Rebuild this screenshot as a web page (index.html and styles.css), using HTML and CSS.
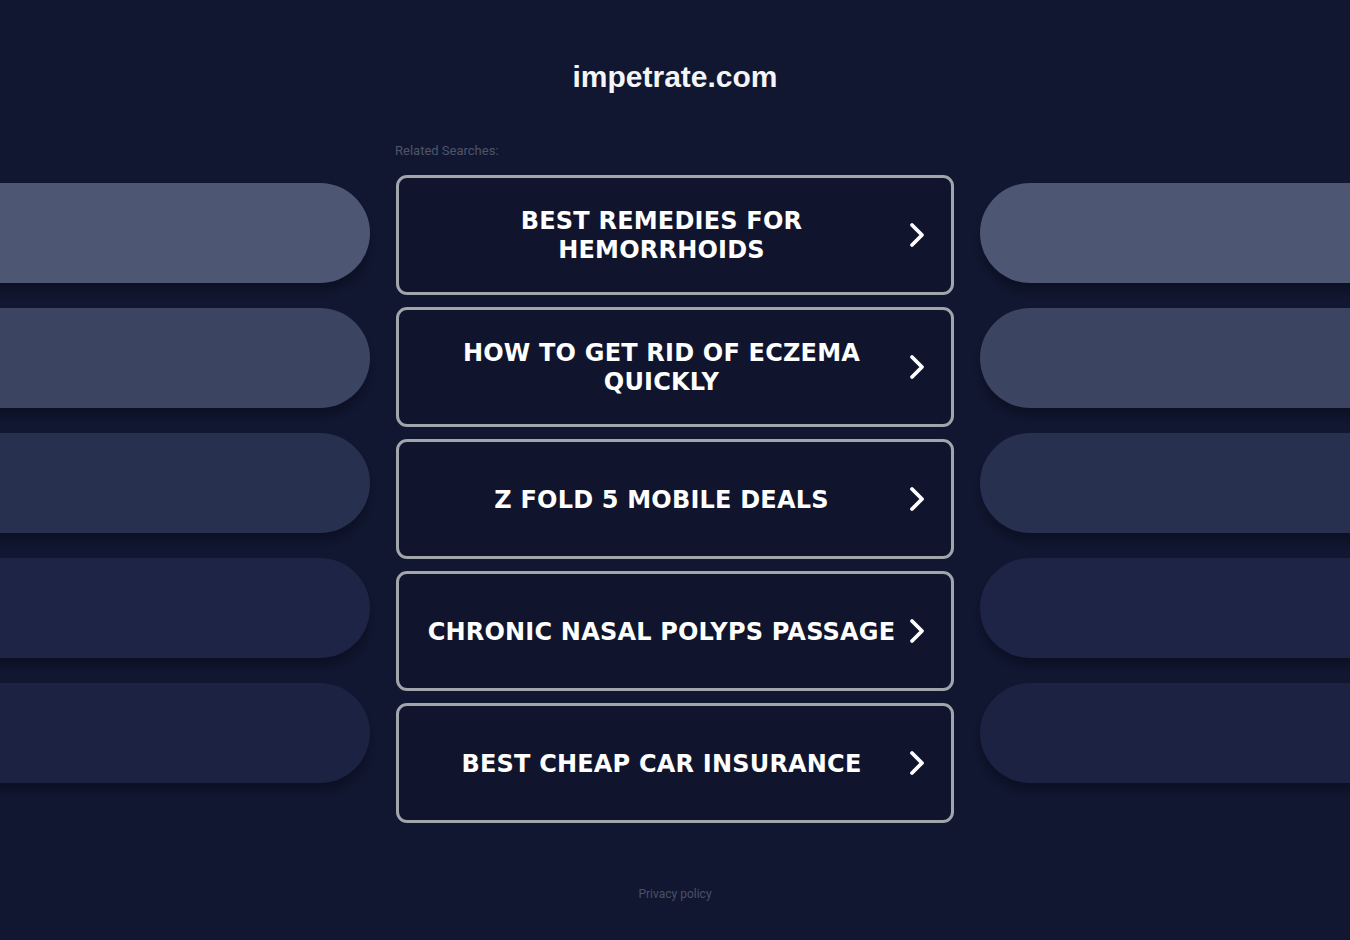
FILE: index.html
```html
<!DOCTYPE html>
<html>
<head>
	<title>impetrate.com</title>
	<link rel="stylesheet" href="styles.css">
</head>
<body>
	<h1 class="domain">impetrate.com</h1>

	<div class="layout">
		<div class="side side-left">
			<div class="pill pill-1"></div>
			<div class="pill pill-2"></div>
			<div class="pill pill-3"></div>
			<div class="pill pill-4"></div>
			<div class="pill pill-5"></div>
		</div>

		<div class="center">
			<p class="related">Related Searches:</p>
			<a class="search" href="#">
				<span class="label">BEST REMEDIES FOR HEMORRHOIDS</span>
				<svg class="arrow" width="18" height="28" viewBox="0 0 18 28"><path d="M4 4 L14 14 L4 24" fill="none" stroke="#fff" stroke-width="3.8" stroke-linecap="round" stroke-linejoin="round"/></svg>
			</a>
			<a class="search" href="#">
				<span class="label">HOW TO GET RID OF ECZEMA QUICKLY</span>
				<svg class="arrow" width="18" height="28" viewBox="0 0 18 28"><path d="M4 4 L14 14 L4 24" fill="none" stroke="#fff" stroke-width="3.8" stroke-linecap="round" stroke-linejoin="round"/></svg>
			</a>
			<a class="search" href="#">
				<span class="label">Z FOLD 5 MOBILE DEALS</span>
				<svg class="arrow" width="18" height="28" viewBox="0 0 18 28"><path d="M4 4 L14 14 L4 24" fill="none" stroke="#fff" stroke-width="3.8" stroke-linecap="round" stroke-linejoin="round"/></svg>
			</a>
			<a class="search" href="#">
				<span class="label">CHRONIC NASAL POLYPS PASSAGE</span>
				<svg class="arrow" width="18" height="28" viewBox="0 0 18 28"><path d="M4 4 L14 14 L4 24" fill="none" stroke="#fff" stroke-width="3.8" stroke-linecap="round" stroke-linejoin="round"/></svg>
			</a>
			<a class="search" href="#">
				<span class="label">BEST CHEAP CAR INSURANCE</span>
				<svg class="arrow" width="18" height="28" viewBox="0 0 18 28"><path d="M4 4 L14 14 L4 24" fill="none" stroke="#fff" stroke-width="3.8" stroke-linecap="round" stroke-linejoin="round"/></svg>
			</a>
		</div>

		<div class="side side-right">
			<div class="pill pill-1"></div>
			<div class="pill pill-2"></div>
			<div class="pill pill-3"></div>
			<div class="pill pill-4"></div>
			<div class="pill pill-5"></div>
		</div>
	</div>

	<div class="footer">
		<a href="#">Privacy policy</a>
	</div>
</body>
</html>
```

FILE: styles.css
```css
html, body {
  margin: 0;
  padding: 0;
}

body {
  background-color: #111730;
  font-family: "Liberation Sans", Arial, sans-serif;
  color: #fff;
  width: 1350px;
  height: 940px;
  overflow: hidden;
}

.domain {
  margin: 0;
  padding-top: 60px;
  height: 34px;
  line-height: 34px;
  text-align: center;
  font-size: 30px;
  font-weight: bold;
  color: #f4f5f8;
}

.layout {
  display: flex;
  gap: 26px;
  margin-top: 49px;
}

.side {
  width: 370px;
  flex: none;
  display: flex;
  flex-direction: column;
  gap: 25px;
  padding-top: 40px;
}

.side-left {
  align-items: flex-end;
}

.pill {
  height: 100px;
  width: 420px;
  border-radius: 50px;
  box-shadow: 0 8px 6px rgba(8, 11, 26, 0.45);
}

.pill-1 { background-color: #4d5672; }
.pill-2 { background-color: #3b4461; }
.pill-3 { background-color: #28304f; }
.pill-4 { background-color: #1d2445; }
.pill-5 { background-color: #1b2242; }

.center {
  width: 558px;
  flex: none;
  display: flex;
  flex-direction: column;
  gap: 12px;
}

.related {
  margin: 0 0 5px -1px;
  height: 15px;
  font-family: Roboto, "Open Sans", sans-serif;
  font-size: 13px;
  line-height: 15px;
  color: #4e556a;
}

.search {
  display: flex;
  align-items: center;
  box-sizing: border-box;
  height: 120px;
  padding: 2px 25px 0 25px;
  border: 3px solid #a1a5ac;
  border-radius: 11px;
  background-color: #10152d;
  text-decoration: none;
}

.label {
  flex: 1;
  text-align: center;
  font-family: "DejaVu Sans", Verdana, sans-serif;
  font-weight: bold;
  font-size: 24px;
  line-height: 29px;
  letter-spacing: 0.2px;
  color: #fff;
}

.arrow {
  flex: none;
  margin-left: 9px;
  margin-top: -2px;
}

.footer {
  margin-top: 61px;
  text-align: center;
}

.footer a {
  font-family: Roboto, "Open Sans", sans-serif;
  font-size: 12px;
  color: #4a5167;
  text-decoration: none;
}
```
